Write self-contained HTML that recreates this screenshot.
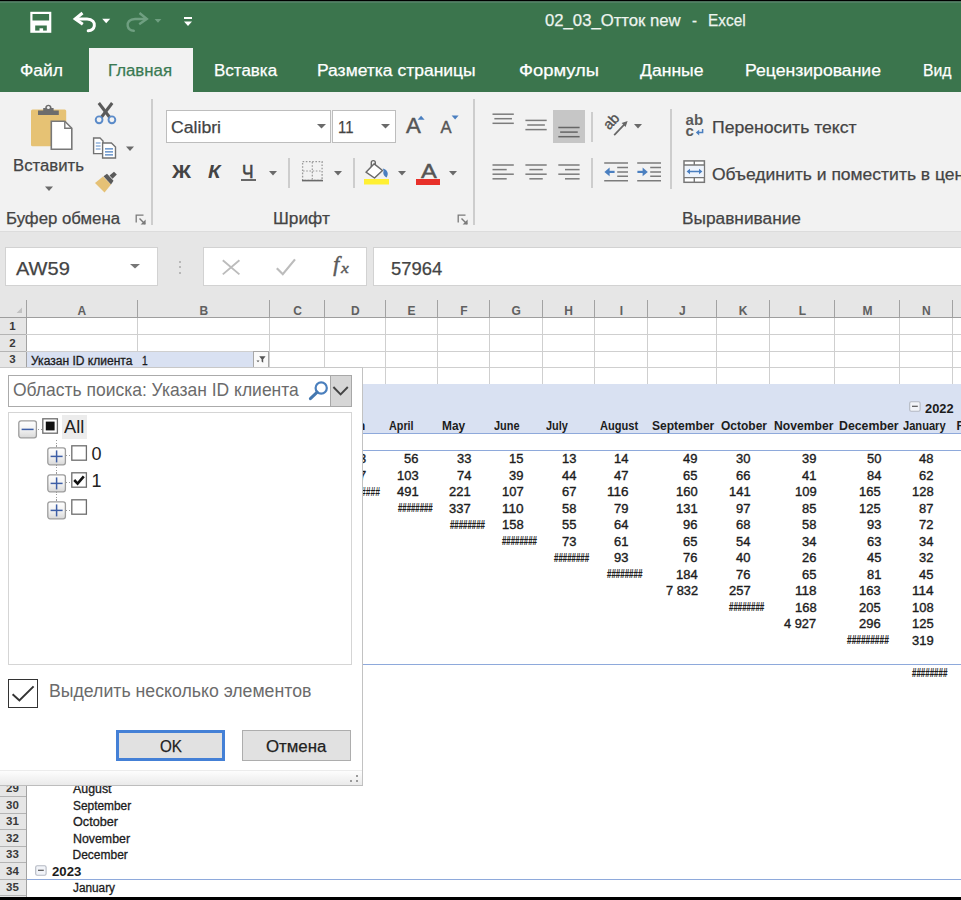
<!DOCTYPE html><html lang="ru"><head><meta charset="utf-8"><title>Excel</title><style>
html,body{margin:0;padding:0;}body{width:961px;height:900px;position:relative;overflow:hidden;background:#fff;font-family:"Liberation Sans", sans-serif;}
.a{position:absolute;display:block;}
.t{position:absolute;white-space:pre;line-height:1;transform-origin:0 0;}
</style></head><body>
<div class="a" style="left:0px;top:0px;width:961px;height:93px;background:#3b754d;"></div>
<div class="a" style="left:0px;top:0px;width:961px;height:1px;background:#000;"></div>
<div class="a" style="left:0px;top:1px;width:961px;height:1px;background:#4a705a;"></div>
<div class="a" style="left:0px;top:2px;width:961px;height:1px;background:#4f8062;"></div>
<div class="a" style="left:89px;top:47.5px;width:103.5px;height:46px;background:#f2f2f2;"></div>
<div class="a" style="left:0px;top:92px;width:961px;height:139px;background:#f2f2f2;"></div>
<div class="a" style="left:0px;top:230.5px;width:961px;height:1px;background:#dcdcdc;"></div>
<div class="a" style="left:0px;top:231.5px;width:961px;height:69px;background:#e6e6e6;"></div>
<svg class="a" style="left:28px;top:9px;" width="26" height="26" viewBox="0 0 26 26">
<rect x="3.4" y="3.9" width="18.8" height="18.8" fill="none" stroke="#fff" stroke-width="2.2"/>
<rect x="3.4" y="11.5" width="18.8" height="5" fill="#fff"/>
<rect x="3.4" y="16" width="3.8" height="6.5" fill="#fff"/>
<rect x="18.8" y="16" width="3.4" height="6.5" fill="#fff"/>
<rect x="11.5" y="19.3" width="3.6" height="3.4" fill="#fff"/>
</svg>
<svg class="a" style="left:70px;top:8px;" width="30" height="28" viewBox="0 0 30 28">
<path d="M12.5 5 L5.2 11 L12.8 16.2" fill="none" stroke="#fff" stroke-width="3" stroke-linejoin="miter"/>
<path d="M6 11 H17 C22.5 11 25 14.5 24.3 18 C23.8 20.6 21.6 22.5 18.2 22.8" fill="none" stroke="#fff" stroke-width="3" stroke-linecap="round"/>
</svg>
<svg class="a" style="left:101px;top:17px;" width="10" height="8" viewBox="0 0 10 8"><path d="M1.2 1.8 H9.2 L5.2 6.2 Z" fill="#fff"/></svg>
<svg class="a" style="left:122px;top:8px;" width="30" height="28" viewBox="0 0 30 28">
<path d="M17.5 5 L24.8 11 L17.2 16.2" fill="none" stroke="#6f9f81" stroke-width="2.4"/>
<path d="M24 11 H13 C7.5 11 5 14.5 5.7 18 C6.2 20.6 8.4 22.5 11.8 22.8" fill="none" stroke="#6f9f81" stroke-width="2.4" stroke-linecap="round"/>
</svg>
<svg class="a" style="left:153px;top:17px;" width="10" height="8" viewBox="0 0 10 8"><path d="M1.6 2 H8.4 L5 5.8 Z" fill="#6f9f81"/></svg>
<svg class="a" style="left:182.4px;top:14px;" width="12" height="16" viewBox="0 0 12 16"><rect x="2" y="3" width="8" height="2" fill="#fff"/><path d="M2 7.5 H10 L6 12 Z" fill="#fff"/></svg>
<svg class="a" style="left:28px;top:102px;" width="48" height="52" viewBox="0 0 48 52">
<rect x="3" y="7.4" width="35.2" height="36.8" rx="1.5" fill="#e6c274"/>
<path d="M10 8.6 H15.2 V6 H17.2 C17.2 1.6 23.6 1.6 23.6 6 H25.6 V8.6 H30.8 V13 H10 Z" fill="#6c6c6c"/>
<circle cx="20.4" cy="5.6" r="1.5" fill="#f1f1f1"/>
<path d="M23.3 19.3 H36.8 L43.8 26.3 V47.3 H23.3 Z" fill="#fff" stroke="#787878" stroke-width="1.6" stroke-linejoin="miter"/>
<path d="M36.8 19.3 V26.3 H43.8" fill="none" stroke="#787878" stroke-width="1.4"/>
</svg>
<svg class="a" style="left:44px;top:185px;" width="10" height="8" viewBox="0 0 10 8"><path d="M1 1.5 H9 L5 6 Z" fill="#6a6a6a"/></svg>
<svg class="a" style="left:93px;top:100px;" width="26" height="26" viewBox="0 0 26 26">
<path d="M5.8 3 L16.8 17.5" stroke="#5a5a5a" stroke-width="3" fill="none"/>
<path d="M19.2 3 L8.2 17.5" stroke="#5a5a5a" stroke-width="3" fill="none"/>
<circle cx="6.1" cy="19.8" r="3.4" fill="none" stroke="#5b8bc9" stroke-width="1.9"/>
<circle cx="18.9" cy="19.8" r="3.4" fill="none" stroke="#5b8bc9" stroke-width="1.9"/>
</svg>
<svg class="a" style="left:92px;top:135px;" width="28" height="28" viewBox="0 0 28 28">
<path d="M1.6 3 H8 L11 6 V18.6 H1.6 Z" fill="#fff" stroke="#727272" stroke-width="1.4"/>
<path d="M3.8 8 H8.6 M3.8 11 H8.6 M3.8 14 H8.6" stroke="#5b8bc9" stroke-width="1.2"/>
<path d="M10.6 8 H19.4 L23.5 12 V23 H10.6 Z" fill="#fff" stroke="#727272" stroke-width="1.4"/>
<path d="M13 13.8 H21 M13 16.8 H21 M13 19.8 H21" stroke="#4a7fc0" stroke-width="1.3"/>
</svg>
<svg class="a" style="left:125px;top:145px;" width="10" height="8" viewBox="0 0 10 8"><path d="M1 1.5 H9 L5 6 Z" fill="#6a6a6a"/></svg>
<svg class="a" style="left:92px;top:170px;" width="28" height="26" viewBox="0 0 28 26">
<path d="M3 13 L11 6.5 L19 14.5 L12.5 22.5 Z" fill="#e5c176"/>
<path d="M11.5 6.2 L15 3.8 L21.5 10.8 L19 14.4 Z" fill="#5a5a5a"/>
<path d="M17.5 5.5 L22 1.8 L24.8 4.6 L20.6 8.8 Z" fill="#5a5a5a"/>
</svg>
<svg class="a" style="left:134.5px;top:214px;" width="12" height="12" viewBox="0 0 12 12"><path d="M1.2 8.5 V1.2 H8.5" fill="none" stroke="#7a7a7a" stroke-width="1.3"/><path d="M4.5 4.5 L10 10" stroke="#7a7a7a" stroke-width="1.4"/><path d="M10.6 5.6 V10.6 H5.6 Z" fill="#7a7a7a"/></svg>
<div class="a" style="left:151.4px;top:99px;width:1.3px;height:126px;background:#cdcdcd;"></div>
<div class="a" style="left:165.5px;top:110px;width:165.5px;height:32.8px;background:#fff;border:1.3px solid #bdbdbd;box-sizing:border-box;"></div>
<div class="a" style="left:332.3px;top:110px;width:64px;height:32.8px;background:#fff;border:1.3px solid #bdbdbd;box-sizing:border-box;"></div>
<svg class="a" style="left:315.5px;top:122.8px;" width="11" height="7" viewBox="0 0 11 7"><path d="M1 1 H10 L5.5 5.4 Z" fill="#6a6a6a"/></svg>
<svg class="a" style="left:379.5px;top:122.8px;" width="11" height="7" viewBox="0 0 11 7"><path d="M1 1 H10 L5.5 5.4 Z" fill="#6a6a6a"/></svg>
<svg class="a" style="left:417px;top:114px;" width="10" height="7" viewBox="0 0 10 7"><path d="M0.6 5.8 H7.6 L4.1 1.7 Z" fill="#4a7fc0"/></svg>
<svg class="a" style="left:450.5px;top:114px;" width="10" height="7" viewBox="0 0 10 7"><path d="M0.6 1.5 H7.6 L4.1 5.6 Z" fill="#4a7fc0"/></svg>
<div class="a" style="left:240.6px;top:179px;width:15px;height:2px;background:#686868;"></div>
<svg class="a" style="left:267.5px;top:169.5px;" width="10" height="7" viewBox="0 0 10 7"><path d="M1 1 H9 L5.0 5.4 Z" fill="#6a6a6a"/></svg>
<div class="a" style="left:288.4px;top:157.5px;width:1.3px;height:30.5px;background:#cdcdcd;"></div>
<svg class="a" style="left:301px;top:160px;" width="24" height="23" viewBox="0 0 24 23">
<rect x="1.6" y="1.6" width="19.5" height="18.8" fill="none" stroke="#9a9a9a" stroke-width="1.3" stroke-dasharray="1.6 1.6"/>
<path d="M11.3 2 V20 M2 11 H21" stroke="#9a9a9a" stroke-width="1.2" stroke-dasharray="1.6 1.6"/>
<path d="M1 20.6 H22" stroke="#6a6a6a" stroke-width="1.6"/>
</svg>
<svg class="a" style="left:332.5px;top:169.5px;" width="10" height="7" viewBox="0 0 10 7"><path d="M1 1 H9 L5.0 5.4 Z" fill="#6a6a6a"/></svg>
<div class="a" style="left:353.4px;top:157.5px;width:1.3px;height:30.5px;background:#cdcdcd;"></div>
<svg class="a" style="left:362px;top:158px;" width="30" height="28" viewBox="0 0 30 28">
<path d="M9.5 8.5 L4 14.2 L12.5 20 L20.5 12.5 L12.2 5.8 Z" fill="#fff" stroke="#6a6a6a" stroke-width="1.5" stroke-linejoin="round"/>
<path d="M9.3 9 V4.6 C9.3 2 13.3 2 13.3 4.6 V7" fill="none" stroke="#6a6a6a" stroke-width="1.4"/>
<path d="M20.8 10.6 C25.4 11.6 27.2 15.8 24.6 19.4 C22 18.4 20.6 15.4 21.6 13 Z" fill="#4a7fc0"/>
<rect x="2" y="21" width="25" height="5.5" fill="#fff033"/>
</svg>
<svg class="a" style="left:397.0px;top:169.5px;" width="10" height="7" viewBox="0 0 10 7"><path d="M1 1 H9 L5.0 5.4 Z" fill="#6a6a6a"/></svg>
<div class="a" style="left:416px;top:179px;width:23.5px;height:5.5px;background:#e8302a;"></div>
<svg class="a" style="left:447.5px;top:169.5px;" width="10" height="7" viewBox="0 0 10 7"><path d="M1 1 H9 L5.0 5.4 Z" fill="#6a6a6a"/></svg>
<svg class="a" style="left:456.5px;top:214px;" width="12" height="12" viewBox="0 0 12 12"><path d="M1.2 8.5 V1.2 H8.5" fill="none" stroke="#7a7a7a" stroke-width="1.3"/><path d="M4.5 4.5 L10 10" stroke="#7a7a7a" stroke-width="1.4"/><path d="M10.6 5.6 V10.6 H5.6 Z" fill="#7a7a7a"/></svg>
<div class="a" style="left:473.4px;top:99px;width:1.3px;height:126px;background:#cdcdcd;"></div>
<div class="a" style="left:552.5px;top:109.7px;width:32.8px;height:33.6px;background:#c6c6c6;"></div>
<svg class="a" style="left:0px;top:0px;" width="961" height="240" viewBox="0 0 961 240"><rect x="492.50" y="113.45" width="21.30" height="1.5" fill="#7c7c7c"/><rect x="494.35" y="117.95" width="17.60" height="1.5" fill="#7c7c7c"/><rect x="492.50" y="122.55" width="21.30" height="1.5" fill="#7c7c7c"/><rect x="525.40" y="119.65" width="21.30" height="1.5" fill="#7c7c7c"/><rect x="527.25" y="124.25" width="17.60" height="1.5" fill="#7c7c7c"/><rect x="525.40" y="128.85" width="21.30" height="1.5" fill="#7c7c7c"/><rect x="558.30" y="126.75" width="21.30" height="1.5" fill="#666"/><rect x="560.15" y="131.35" width="17.60" height="1.5" fill="#666"/><rect x="558.30" y="135.95" width="21.30" height="1.5" fill="#666"/><rect x="492.50" y="164.25" width="21.30" height="1.5" fill="#7c7c7c"/><rect x="492.50" y="168.85" width="14.20" height="1.5" fill="#7c7c7c"/><rect x="492.50" y="173.45" width="21.30" height="1.5" fill="#7c7c7c"/><rect x="492.50" y="178.05" width="14.20" height="1.5" fill="#7c7c7c"/><rect x="525.40" y="164.25" width="21.30" height="1.5" fill="#7c7c7c"/><rect x="529.35" y="168.85" width="13.40" height="1.5" fill="#7c7c7c"/><rect x="525.40" y="173.45" width="21.30" height="1.5" fill="#7c7c7c"/><rect x="529.35" y="178.05" width="13.40" height="1.5" fill="#7c7c7c"/><rect x="558.30" y="164.25" width="21.30" height="1.5" fill="#7c7c7c"/><rect x="565.00" y="168.85" width="14.60" height="1.5" fill="#7c7c7c"/><rect x="558.30" y="173.45" width="21.30" height="1.5" fill="#7c7c7c"/><rect x="565.00" y="178.05" width="14.60" height="1.5" fill="#7c7c7c"/></svg>
<div class="a" style="left:591.4px;top:111.5px;width:1.3px;height:30.0px;background:#cdcdcd;"></div>
<div class="a" style="left:591.4px;top:157.5px;width:1.3px;height:30.5px;background:#cdcdcd;"></div>
<svg class="a" style="left:601px;top:108px;" width="32" height="32" viewBox="0 0 32 32">
<path d="M13.2 27.2 L24.6 15.2" stroke="#666" stroke-width="1.7"/>
<path d="M26.6 13 L20.6 15.1 L24.6 19 Z" fill="#666"/>
<text x="0" y="0" transform="translate(8.2 22.6) rotate(-47)" font-family="Liberation Sans, sans-serif" font-size="14.5" fill="#505050" stroke="#505050" stroke-width="0.35">ab</text>
</svg>
<svg class="a" style="left:632.5px;top:123.4px;" width="10" height="7" viewBox="0 0 10 7"><path d="M1 1 H9 L5.0 5.4 Z" fill="#6a6a6a"/></svg>
<svg class="a" style="left:603.5px;top:161.5px;" width="24" height="20" viewBox="0 0 24 20"><path d="M0.2 1 H24 M0.2 18.8 H24" stroke="#7c7c7c" stroke-width="1.5"/><path d="M13.2 5.5 H24 M13.2 9.9 H24 M13.2 14.3 H24" stroke="#7c7c7c" stroke-width="1.5"/><path d="M4 9.9 H10.6" stroke="#4a7fc0" stroke-width="2.2"/><path d="M5.6 5.6 L0.4 9.9 L5.6 14.2 Z" fill="#4a7fc0"/></svg>
<svg class="a" style="left:636.5px;top:161.5px;" width="24" height="20" viewBox="0 0 24 20"><path d="M0.2 1 H24 M0.2 18.8 H24" stroke="#7c7c7c" stroke-width="1.5"/><path d="M13.2 5.5 H24 M13.2 9.9 H24 M13.2 14.3 H24" stroke="#7c7c7c" stroke-width="1.5"/><path d="M0.4 9.9 H7" stroke="#4a7fc0" stroke-width="2.2"/><path d="M5.6 5.6 L10.8 9.9 L5.6 14.2 Z" fill="#4a7fc0"/></svg>
<div class="a" style="left:670.4px;top:109px;width:1.3px;height:80px;background:#cdcdcd;"></div>
<svg class="a" style="left:683px;top:110px;" width="26" height="30" viewBox="0 0 26 30">
<text x="2.6" y="14.8" font-family="Liberation Sans, sans-serif" font-size="14.6" font-weight="700" fill="#5a5a5a" textLength="17.6" lengthAdjust="spacingAndGlyphs">ab</text>
<text x="2.6" y="26.2" font-family="Liberation Sans, sans-serif" font-size="15" font-weight="700" fill="#5a5a5a">c</text>
<path d="M19.6 19 V22.6 H14.6" fill="none" stroke="#4a7fc0" stroke-width="1.5"/>
<path d="M16.2 19.8 L12.8 22.6 L16.2 25.4 Z" fill="#4a7fc0"/>
</svg>
<svg class="a" style="left:682px;top:159px;" width="26" height="26" viewBox="0 0 26 26">
<rect x="2" y="1.9" width="20.4" height="21.4" fill="#fff" stroke="#777" stroke-width="1.5"/>
<rect x="2.8" y="6.4" width="18.8" height="11.8" fill="#eef4fc"/>
<path d="M2 6 H22.4 M2 18.6 H22.4 M12.3 1.9 V6 M12.3 18.6 V23.3" stroke="#777" stroke-width="1.4"/>
<path d="M6.5 12.5 H18.5" stroke="#4a7fc0" stroke-width="1.5"/>
<path d="M8 9.7 L4.6 12.5 L8 15.3 Z M17 9.7 L20.4 12.5 L17 15.3 Z" fill="#4a7fc0"/>
</svg>
<div class="a" style="left:5px;top:247px;width:153px;height:39px;background:#fff;border:1px solid #d2d2d2;box-sizing:border-box;"></div>
<svg class="a" style="left:128.5px;top:262.5px;" width="12" height="7" viewBox="0 0 12 7"><path d="M1 1 H11 L6.0 5.4 Z" fill="#777"/></svg>
<div class="a" style="left:179px;top:260.5px;width:2px;height:2px;background:#b8b8b8;"></div>
<div class="a" style="left:179px;top:266px;width:2px;height:2px;background:#b8b8b8;"></div>
<div class="a" style="left:179px;top:271.5px;width:2px;height:2px;background:#b8b8b8;"></div>
<div class="a" style="left:203px;top:247px;width:164px;height:39px;background:#fff;border:1px solid #d2d2d2;box-sizing:border-box;"></div>
<svg class="a" style="left:221px;top:258px;" width="20" height="19" viewBox="0 0 20 19"><path d="M1.8 2.2 L18.4 16.4 M18.4 2.2 L1.8 16.4" stroke="#bcbcbc" stroke-width="1.9" fill="none"/></svg>
<svg class="a" style="left:274px;top:257px;" width="24" height="20" viewBox="0 0 24 20"><path d="M2.8 11.2 L8.8 17.2 L21 2.4" stroke="#bcbcbc" stroke-width="2.2" fill="none"/></svg>
<div class="a" style="left:373px;top:247px;width:600px;height:39px;background:#fff;border:1px solid #d2d2d2;box-sizing:border-box;"></div>
<div class="a" style="left:0px;top:300px;width:961px;height:18px;background:#e6e6e6;"></div>
<div class="a" style="left:0px;top:317px;width:961px;height:1px;background:#9e9e9e;"></div>
<div class="a" style="left:137px;top:300px;width:1px;height:17px;background:#a2a2a2;"></div>
<div class="a" style="left:269px;top:300px;width:1px;height:17px;background:#a2a2a2;"></div>
<div class="a" style="left:324px;top:300px;width:1px;height:17px;background:#a2a2a2;"></div>
<div class="a" style="left:385px;top:300px;width:1px;height:17px;background:#a2a2a2;"></div>
<div class="a" style="left:437px;top:300px;width:1px;height:17px;background:#a2a2a2;"></div>
<div class="a" style="left:489px;top:300px;width:1px;height:17px;background:#a2a2a2;"></div>
<div class="a" style="left:542px;top:300px;width:1px;height:17px;background:#a2a2a2;"></div>
<div class="a" style="left:594px;top:300px;width:1px;height:17px;background:#a2a2a2;"></div>
<div class="a" style="left:647px;top:300px;width:1px;height:17px;background:#a2a2a2;"></div>
<div class="a" style="left:716px;top:300px;width:1px;height:17px;background:#a2a2a2;"></div>
<div class="a" style="left:769px;top:300px;width:1px;height:17px;background:#a2a2a2;"></div>
<div class="a" style="left:834px;top:300px;width:1px;height:17px;background:#a2a2a2;"></div>
<div class="a" style="left:899px;top:300px;width:1px;height:17px;background:#a2a2a2;"></div>
<div class="a" style="left:952px;top:300px;width:1px;height:17px;background:#a2a2a2;"></div>
<div class="a" style="left:1009px;top:300px;width:1px;height:17px;background:#a2a2a2;"></div>
<div class="a" style="left:26px;top:300px;width:1px;height:17px;background:#a2a2a2;"></div>
<svg class="a" style="left:15px;top:306px;" width="8" height="8" viewBox="0 0 8 8"><path d="M7 1.6 V7 H1.6 Z" fill="#c2c2c2"/></svg>
<div class="a" style="left:0px;top:318px;width:26px;height:580px;background:#e6e6e6;"></div>
<div class="a" style="left:26px;top:318px;width:1px;height:580px;background:#a2a2a2;"></div>
<div class="a" style="left:0px;top:334px;width:26px;height:1px;background:#b4b4b4;"></div>
<div class="a" style="left:0px;top:351px;width:26px;height:1px;background:#b4b4b4;"></div>
<div class="a" style="left:0px;top:367px;width:26px;height:1px;background:#b4b4b4;"></div>
<div class="a" style="left:0px;top:384px;width:26px;height:1px;background:#b4b4b4;"></div>
<div class="a" style="left:0px;top:400px;width:26px;height:1px;background:#b4b4b4;"></div>
<div class="a" style="left:0px;top:417px;width:26px;height:1px;background:#b4b4b4;"></div>
<div class="a" style="left:0px;top:433px;width:26px;height:1px;background:#b4b4b4;"></div>
<div class="a" style="left:0px;top:450px;width:26px;height:1px;background:#b4b4b4;"></div>
<div class="a" style="left:0px;top:466px;width:26px;height:1px;background:#b4b4b4;"></div>
<div class="a" style="left:0px;top:483px;width:26px;height:1px;background:#b4b4b4;"></div>
<div class="a" style="left:0px;top:499px;width:26px;height:1px;background:#b4b4b4;"></div>
<div class="a" style="left:0px;top:516px;width:26px;height:1px;background:#b4b4b4;"></div>
<div class="a" style="left:0px;top:532px;width:26px;height:1px;background:#b4b4b4;"></div>
<div class="a" style="left:0px;top:549px;width:26px;height:1px;background:#b4b4b4;"></div>
<div class="a" style="left:0px;top:565px;width:26px;height:1px;background:#b4b4b4;"></div>
<div class="a" style="left:0px;top:582px;width:26px;height:1px;background:#b4b4b4;"></div>
<div class="a" style="left:0px;top:598px;width:26px;height:1px;background:#b4b4b4;"></div>
<div class="a" style="left:0px;top:615px;width:26px;height:1px;background:#b4b4b4;"></div>
<div class="a" style="left:0px;top:631px;width:26px;height:1px;background:#b4b4b4;"></div>
<div class="a" style="left:0px;top:648px;width:26px;height:1px;background:#b4b4b4;"></div>
<div class="a" style="left:0px;top:664px;width:26px;height:1px;background:#b4b4b4;"></div>
<div class="a" style="left:0px;top:681px;width:26px;height:1px;background:#b4b4b4;"></div>
<div class="a" style="left:0px;top:697px;width:26px;height:1px;background:#b4b4b4;"></div>
<div class="a" style="left:0px;top:714px;width:26px;height:1px;background:#b4b4b4;"></div>
<div class="a" style="left:0px;top:730px;width:26px;height:1px;background:#b4b4b4;"></div>
<div class="a" style="left:0px;top:747px;width:26px;height:1px;background:#b4b4b4;"></div>
<div class="a" style="left:0px;top:763px;width:26px;height:1px;background:#b4b4b4;"></div>
<div class="a" style="left:0px;top:780px;width:26px;height:1px;background:#b4b4b4;"></div>
<div class="a" style="left:0px;top:796px;width:26px;height:1px;background:#b4b4b4;"></div>
<div class="a" style="left:0px;top:813px;width:26px;height:1px;background:#b4b4b4;"></div>
<div class="a" style="left:0px;top:829px;width:26px;height:1px;background:#b4b4b4;"></div>
<div class="a" style="left:0px;top:846px;width:26px;height:1px;background:#b4b4b4;"></div>
<div class="a" style="left:0px;top:862px;width:26px;height:1px;background:#b4b4b4;"></div>
<div class="a" style="left:0px;top:879px;width:26px;height:1px;background:#b4b4b4;"></div>
<div class="a" style="left:0px;top:895px;width:26px;height:1px;background:#b4b4b4;"></div>
<div class="a" style="left:26px;top:334px;width:961px;height:1px;background:#cfcfcf;"></div>
<div class="a" style="left:26px;top:351px;width:961px;height:1px;background:#cfcfcf;"></div>
<div class="a" style="left:26px;top:367px;width:961px;height:1px;background:#cfcfcf;"></div>
<div class="a" style="left:26px;top:384px;width:961px;height:1px;background:#cfcfcf;"></div>
<div class="a" style="left:137px;top:318px;width:1px;height:66px;background:#cfcfcf;"></div>
<div class="a" style="left:269px;top:318px;width:1px;height:66px;background:#cfcfcf;"></div>
<div class="a" style="left:324px;top:318px;width:1px;height:66px;background:#cfcfcf;"></div>
<div class="a" style="left:385px;top:318px;width:1px;height:66px;background:#cfcfcf;"></div>
<div class="a" style="left:437px;top:318px;width:1px;height:66px;background:#cfcfcf;"></div>
<div class="a" style="left:489px;top:318px;width:1px;height:66px;background:#cfcfcf;"></div>
<div class="a" style="left:542px;top:318px;width:1px;height:66px;background:#cfcfcf;"></div>
<div class="a" style="left:594px;top:318px;width:1px;height:66px;background:#cfcfcf;"></div>
<div class="a" style="left:647px;top:318px;width:1px;height:66px;background:#cfcfcf;"></div>
<div class="a" style="left:716px;top:318px;width:1px;height:66px;background:#cfcfcf;"></div>
<div class="a" style="left:769px;top:318px;width:1px;height:66px;background:#cfcfcf;"></div>
<div class="a" style="left:834px;top:318px;width:1px;height:66px;background:#cfcfcf;"></div>
<div class="a" style="left:899px;top:318px;width:1px;height:66px;background:#cfcfcf;"></div>
<div class="a" style="left:952px;top:318px;width:1px;height:66px;background:#cfcfcf;"></div>
<div class="a" style="left:1009px;top:318px;width:1px;height:66px;background:#cfcfcf;"></div>
<div class="a" style="left:27px;top:352px;width:242px;height:15px;background:#d9e1f2;"></div>
<div class="a" style="left:253px;top:351px;width:16px;height:17px;background:#fafafa;border:1px solid #a8a8a8;box-sizing:border-box;"></div>
<svg class="a" style="left:254.5px;top:354.2px;" width="12" height="11" viewBox="0 0 12 11"><path d="M4.2 2.2 H10.6 L8.2 5.2 V8.8 L6.6 7.6 V5.2 Z" fill="#555"/><path d="M1.5 6.5 H4.5 L3 8.3 Z" fill="#555"/></svg>
<div class="a" style="left:27px;top:384px;width:961px;height:49px;background:#d9e1f2;"></div>
<div class="a" style="left:27px;top:433px;width:961px;height:1px;background:#8ea9db;"></div>
<div class="a" style="left:27px;top:450px;width:961px;height:1px;background:#8ea9db;"></div>
<div class="a" style="left:27px;top:664px;width:961px;height:1px;background:#8ea9db;"></div>
<div class="a" style="left:27px;top:879px;width:961px;height:1px;background:#8ea9db;"></div>
<svg class="a" style="left:908.8px;top:401.4px;" width="12" height="11" viewBox="0 0 12 11"><rect x="0.7" y="0.7" width="10.4" height="9.6" rx="1.5" fill="#f2f4f9" stroke="#b4b8c2" stroke-width="1.1"/><path d="M3 5.3 H8.8" stroke="#555" stroke-width="1.2"/></svg>
<svg class="a" style="left:35px;top:864.5px;" width="12" height="11" viewBox="0 0 12 11"><rect x="0.7" y="0.7" width="10.4" height="9.6" rx="1.5" fill="#f2f4f9" stroke="#b4b8c2" stroke-width="1.1"/><path d="M3 5.3 H8.8" stroke="#555" stroke-width="1.2"/></svg>
<div class="a" style="left:0px;top:897px;width:961px;height:3px;background:#000;z-index:50;"></div>
<div class="a" style="left:0px;top:367.3px;width:363.4px;height:418.6px;background:#fff;z-index:10;"></div>
<div class="a" style="left:362.2px;top:367.3px;width:1.3px;height:418.6px;background:#c2c2c2;z-index:10;"></div>
<div class="a" style="left:0px;top:367.3px;width:363.4px;height:1px;background:#c8c8c8;z-index:10;"></div>
<div class="a" style="left:0px;top:770px;width:362.2px;height:15.8px;z-index:10;background:linear-gradient(#fdfdfd,#e9e9e9);border-top:1px solid #ececec;box-sizing:border-box;"></div>
<div class="a" style="left:0px;top:785.2px;width:363.4px;height:1px;background:#bdbdbd;z-index:10;"></div>
<div class="a" style="left:355.5px;top:774.5px;width:2px;height:2px;background:#9a9a9a;z-index:10;"></div>
<div class="a" style="left:355.5px;top:779.8px;width:2px;height:2px;background:#9a9a9a;z-index:10;"></div>
<div class="a" style="left:350.2px;top:779.8px;width:2px;height:2px;background:#9a9a9a;z-index:10;"></div>
<div class="a" style="left:8.3px;top:375px;width:344px;height:32px;background:#fff;border:1.4px solid #ababab;box-sizing:border-box;z-index:10;"></div>
<div class="a" style="left:330.4px;top:375px;width:22px;height:32px;background:#d6d6d6;border:1.4px solid #a8a8a8;box-sizing:border-box;z-index:10;"></div>
<svg class="a" style="left:330.5px;top:381.5px;z-index:10;" width="20" height="18" viewBox="0 0 20 18"><path d="M2.4 5 L9.6 12.4 L16.8 5" fill="none" stroke="#444" stroke-width="1.9"/></svg>
<svg class="a" style="left:307.2px;top:379.2px;z-index:10;" width="24" height="22" viewBox="0 0 24 22"><circle cx="14.2" cy="9" r="5.6" fill="none" stroke="#4a7fbd" stroke-width="2.2"/><path d="M10.2 13.2 L3.4 19.6" stroke="#4478b0" stroke-width="3" stroke-linecap="round"/></svg>
<div class="a" style="left:8.3px;top:412px;width:344px;height:253px;background:#fff;border:1.2px solid #d5d5d5;box-sizing:border-box;z-index:10;"></div>
<div class="a" style="left:56px;top:440px;width:1px;height:61px;z-index:10;background:repeating-linear-gradient(#9a9a9a 0 1.3px,transparent 1.3px 2.7px);"></div>
<div class="a" style="left:37.5px;top:428.6px;width:5px;height:1px;z-index:10;background:repeating-linear-gradient(90deg,#9a9a9a 0 1.3px,transparent 1.3px 2.7px);"></div>
<div class="a" style="left:65.6px;top:455.4px;width:5.5px;height:1px;z-index:10;background:repeating-linear-gradient(90deg,#9a9a9a 0 1.3px,transparent 1.3px 2.7px);"></div>
<div class="a" style="left:65.6px;top:482.4px;width:5.5px;height:1px;z-index:10;background:repeating-linear-gradient(90deg,#9a9a9a 0 1.3px,transparent 1.3px 2.7px);"></div>
<div class="a" style="left:65.6px;top:509.6px;width:5.5px;height:1px;z-index:10;background:repeating-linear-gradient(90deg,#9a9a9a 0 1.3px,transparent 1.3px 2.7px);"></div>
<div class="a" style="left:62.3px;top:415px;width:24.5px;height:23.8px;background:#ececec;z-index:10;"></div>
<svg class="a" style="left:18px;top:419.6px;z-index:10;" width="20" height="19" viewBox="0 0 20 19"><defs><linearGradient id="g419" x1="0" y1="0" x2="0" y2="1"><stop offset="0" stop-color="#fff"/><stop offset="0.5" stop-color="#f3f3f3"/><stop offset="1" stop-color="#d8d8d8"/></linearGradient></defs><rect x="0.8" y="0.8" width="17.6" height="17" rx="2.2" fill="url(#g419)" stroke="#9c9c9c" stroke-width="1.3"/><path d="M3.6 9.4 H15.6" stroke="#3d5ea6" stroke-width="1.5"/></svg>
<svg class="a" style="left:42.2px;top:418.2px;z-index:10;" width="17" height="17" viewBox="0 0 17 17"><rect x="0.8" y="0.8" width="14.6" height="14.4" fill="#fff" stroke="#6e6e6e" stroke-width="1.3"/><rect x="3.8" y="3.6" width="8.8" height="8.8" fill="#111"/></svg>
<svg class="a" style="left:46.6px;top:446.6px;z-index:10;" width="20" height="19" viewBox="0 0 20 19"><defs><linearGradient id="g446" x1="0" y1="0" x2="0" y2="1"><stop offset="0" stop-color="#fff"/><stop offset="0.5" stop-color="#f3f3f3"/><stop offset="1" stop-color="#d8d8d8"/></linearGradient></defs><rect x="0.8" y="0.8" width="17.6" height="17" rx="2.2" fill="url(#g446)" stroke="#9c9c9c" stroke-width="1.3"/><path d="M3.6 9.4 H15.6" stroke="#3d5ea6" stroke-width="1.5"/><path d="M9.6 3.4 V15.4" stroke="#3d5ea6" stroke-width="1.5"/></svg>
<svg class="a" style="left:70.6px;top:445.20000000000005px;z-index:10;" width="17" height="17" viewBox="0 0 17 17"><rect x="0.8" y="0.8" width="14.6" height="14.4" fill="#fff" stroke="#6e6e6e" stroke-width="1.3"/></svg>
<svg class="a" style="left:46.6px;top:473.6px;z-index:10;" width="20" height="19" viewBox="0 0 20 19"><defs><linearGradient id="g473" x1="0" y1="0" x2="0" y2="1"><stop offset="0" stop-color="#fff"/><stop offset="0.5" stop-color="#f3f3f3"/><stop offset="1" stop-color="#d8d8d8"/></linearGradient></defs><rect x="0.8" y="0.8" width="17.6" height="17" rx="2.2" fill="url(#g473)" stroke="#9c9c9c" stroke-width="1.3"/><path d="M3.6 9.4 H15.6" stroke="#3d5ea6" stroke-width="1.5"/><path d="M9.6 3.4 V15.4" stroke="#3d5ea6" stroke-width="1.5"/></svg>
<svg class="a" style="left:70.6px;top:472.20000000000005px;z-index:10;" width="17" height="17" viewBox="0 0 17 17"><rect x="0.8" y="0.8" width="14.6" height="14.4" fill="#fff" stroke="#6e6e6e" stroke-width="1.3"/><path d="M3.2 8 L6.6 11.6 L12.8 4.4" fill="none" stroke="#111" stroke-width="2.6"/></svg>
<svg class="a" style="left:46.6px;top:500.6px;z-index:10;" width="20" height="19" viewBox="0 0 20 19"><defs><linearGradient id="g500" x1="0" y1="0" x2="0" y2="1"><stop offset="0" stop-color="#fff"/><stop offset="0.5" stop-color="#f3f3f3"/><stop offset="1" stop-color="#d8d8d8"/></linearGradient></defs><rect x="0.8" y="0.8" width="17.6" height="17" rx="2.2" fill="url(#g500)" stroke="#9c9c9c" stroke-width="1.3"/><path d="M3.6 9.4 H15.6" stroke="#3d5ea6" stroke-width="1.5"/><path d="M9.6 3.4 V15.4" stroke="#3d5ea6" stroke-width="1.5"/></svg>
<svg class="a" style="left:70.6px;top:499.20000000000005px;z-index:10;" width="17" height="17" viewBox="0 0 17 17"><rect x="0.8" y="0.8" width="14.6" height="14.4" fill="#fff" stroke="#6e6e6e" stroke-width="1.3"/></svg>
<div class="a" style="left:8px;top:679px;width:29.6px;height:29.2px;background:#fff;border:1.7px solid #333;box-sizing:border-box;z-index:10;"></div>
<svg class="a" style="left:9px;top:680px;z-index:10;" width="28" height="28" viewBox="0 0 28 28"><path d="M3.6 14.2 L10.4 20.4 L24.6 6.4" fill="none" stroke="#333" stroke-width="2"/></svg>
<div class="a" style="left:116px;top:730px;width:109px;height:31px;background:#e1e1e1;border:3px solid #4480d6;box-sizing:border-box;z-index:10;"></div>
<div class="a" style="left:242px;top:730px;width:109.4px;height:30.8px;background:#e1e1e1;border:1.3px solid #adadad;box-sizing:border-box;z-index:10;"></div>
<span class="t" id="t0" style="top:12.16px;font-size:17.3px;color:#eef4ef;-webkit-text-stroke:0.25px #eef4ef;left:545.00px;transform:scaleX(0.9657);">02_03_Отток new</span>
<span class="t" id="t1" style="top:12.16px;font-size:17.3px;color:#eef4ef;-webkit-text-stroke:0.25px #eef4ef;left:691.90px;transform:scaleX(0.8672);">-</span>
<span class="t" id="t2" style="top:12.16px;font-size:17.3px;color:#eef4ef;-webkit-text-stroke:0.25px #eef4ef;left:708.00px;transform:scaleX(0.8896);">Excel</span>
<span class="t" id="t3" style="top:62.06px;font-size:17.3px;color:#fff;-webkit-text-stroke:0.25px #fff;left:20.00px;transform:scaleX(1.0118);">Файл</span>
<span class="t" id="t4" style="top:62.06px;font-size:17.3px;color:#3a7a52;-webkit-text-stroke:0.25px #3a7a52;left:108.00px;transform:scaleX(0.9729);">Главная</span>
<span class="t" id="t5" style="top:62.06px;font-size:17.3px;color:#fff;-webkit-text-stroke:0.25px #fff;left:213.50px;transform:scaleX(0.9823);">Вставка</span>
<span class="t" id="t6" style="top:62.06px;font-size:17.3px;color:#fff;-webkit-text-stroke:0.25px #fff;left:317.30px;transform:scaleX(1.0122);">Разметка страницы</span>
<span class="t" id="t7" style="top:62.06px;font-size:17.3px;color:#fff;-webkit-text-stroke:0.25px #fff;left:519.00px;transform:scaleX(1.0638);">Формулы</span>
<span class="t" id="t8" style="top:62.06px;font-size:17.3px;color:#fff;-webkit-text-stroke:0.25px #fff;left:640.00px;transform:scaleX(1.0170);">Данные</span>
<span class="t" id="t9" style="top:62.06px;font-size:17.3px;color:#fff;-webkit-text-stroke:0.25px #fff;left:745.00px;transform:scaleX(1.0191);">Рецензирование</span>
<span class="t" id="t10" style="top:62.06px;font-size:17.3px;color:#fff;-webkit-text-stroke:0.25px #fff;left:922.50px;transform:scaleX(0.9115);">Вид</span>
<span class="t" id="t11" style="top:157.06px;font-size:17.3px;color:#444444;-webkit-text-stroke:0.25px #444444;left:13.00px;transform:scaleX(0.9691);">Вставить</span>
<span class="t" id="t12" style="top:210.06px;font-size:17.3px;color:#444444;-webkit-text-stroke:0.25px #444444;left:5.50px;transform:scaleX(0.9707);">Буфер обмена</span>
<span class="t" id="t13" style="top:118.56px;font-size:17.3px;color:#444444;-webkit-text-stroke:0.25px #444444;left:171.00px;transform:scaleX(1.0207);">Calibri</span>
<span class="t" id="t14" style="top:118.56px;font-size:17.3px;color:#444444;-webkit-text-stroke:0.25px #444444;left:337.50px;transform:scaleX(0.8634);">11</span>
<span class="t" id="t15" style="top:116.20px;font-size:21.5px;color:#555;-webkit-text-stroke:0.45px #555;left:405.60px;transform:scaleX(1.0318);">A</span>
<span class="t" id="t16" style="top:120.35px;font-size:16.6px;color:#555;-webkit-text-stroke:0.4px #555;left:440.60px;">A</span>
<span class="t" id="t17" style="top:163.04px;font-size:18.5px;color:#444;font-weight:700;left:172.00px;transform:scaleX(1.1354);">Ж</span>
<span class="t" id="t18" style="top:163.04px;font-size:18.5px;color:#444;font-weight:700;font-style:italic;left:207.50px;transform:scaleX(1.0989);">К</span>
<span class="t" id="t19" style="top:162.64px;font-size:18.5px;color:#444;-webkit-text-stroke:0.55px #444;left:241.50px;transform:scaleX(0.9316);">Ч</span>
<span class="t" id="t20" style="top:161.37px;font-size:20px;color:#555;-webkit-text-stroke:0.45px #555;left:421.40px;transform:scaleX(1.1841);">A</span>
<span class="t" id="t21" style="top:210.06px;font-size:17.3px;color:#444444;-webkit-text-stroke:0.25px #444444;left:273.00px;">Шрифт</span>
<span class="t" id="t22" style="top:119.06px;font-size:17.3px;color:#444444;-webkit-text-stroke:0.25px #444444;left:712.40px;transform:scaleX(1.0177);">Переносить текст</span>
<span class="t" id="t23" style="top:165.56px;font-size:17.3px;color:#444444;-webkit-text-stroke:0.25px #444444;left:712.40px;transform:scaleX(1.0125);">Объединить и поместить в центре</span>
<span class="t" id="t24" style="top:210.06px;font-size:17.3px;color:#444444;-webkit-text-stroke:0.25px #444444;left:682.00px;">Выравнивание</span>
<span class="t" id="t25" style="top:258.62px;font-size:19px;color:#444;-webkit-text-stroke:0.25px #444;left:15.60px;transform:scaleX(1.0539);">AW59</span>
<span class="t" id="t26" style="top:253.80px;font-size:21.5px;color:#5a5a5a;font-style:italic;font-family:'Liberation Serif', serif;-webkit-text-stroke:0.5px #5a5a5a;left:333.20px;">f</span>
<span class="t" id="t27" style="top:260.73px;font-size:14.5px;color:#5a5a5a;font-style:italic;font-family:'Liberation Serif', serif;-webkit-text-stroke:0.4px #5a5a5a;left:340.60px;transform:scaleX(1.2117);">x</span>
<span class="t" id="t28" style="top:258.62px;font-size:19px;color:#444;-webkit-text-stroke:0.25px #444;left:390.70px;transform:scaleX(0.9708);">57964</span>
<span class="t" id="t29" style="top:305.24px;font-size:12px;color:#606060;font-weight:700;left:77.46px;">A</span>
<span class="t" id="t30" style="top:305.24px;font-size:12px;color:#606060;font-weight:700;left:199.46px;">B</span>
<span class="t" id="t31" style="top:305.24px;font-size:12px;color:#606060;font-weight:700;left:293.16px;">C</span>
<span class="t" id="t32" style="top:305.24px;font-size:12px;color:#606060;font-weight:700;left:350.91px;">D</span>
<span class="t" id="t33" style="top:305.24px;font-size:12px;color:#606060;font-weight:700;left:407.54px;">E</span>
<span class="t" id="t34" style="top:305.24px;font-size:12px;color:#606060;font-weight:700;left:460.13px;">F</span>
<span class="t" id="t35" style="top:305.24px;font-size:12px;color:#606060;font-weight:700;left:511.53px;">G</span>
<span class="t" id="t36" style="top:305.24px;font-size:12px;color:#606060;font-weight:700;left:564.36px;">H</span>
<span class="t" id="t37" style="top:305.24px;font-size:12px;color:#606060;font-weight:700;left:619.73px;">I</span>
<span class="t" id="t38" style="top:305.24px;font-size:12px;color:#606060;font-weight:700;left:678.96px;">J</span>
<span class="t" id="t39" style="top:305.24px;font-size:12px;color:#606060;font-weight:700;left:738.81px;">K</span>
<span class="t" id="t40" style="top:305.24px;font-size:12px;color:#606060;font-weight:700;left:798.68px;">L</span>
<span class="t" id="t41" style="top:305.24px;font-size:12px;color:#606060;font-weight:700;left:862.60px;">M</span>
<span class="t" id="t42" style="top:305.24px;font-size:12px;color:#606060;font-weight:700;left:922.06px;">N</span>
<span class="t" id="t43" style="top:321.37px;font-size:11.5px;color:#3a3a3a;font-weight:700;left:9.30px;">1</span>
<span class="t" id="t44" style="top:337.87px;font-size:11.5px;color:#3a3a3a;font-weight:700;left:9.30px;">2</span>
<span class="t" id="t45" style="top:354.37px;font-size:11.5px;color:#3a3a3a;font-weight:700;left:9.30px;">3</span>
<span class="t" id="t46" style="top:783.37px;font-size:11.5px;color:#3a3a3a;font-weight:700;left:6.10px;">29</span>
<span class="t" id="t47" style="top:799.87px;font-size:11.5px;color:#3a3a3a;font-weight:700;left:6.10px;">30</span>
<span class="t" id="t48" style="top:816.37px;font-size:11.5px;color:#3a3a3a;font-weight:700;left:6.10px;">31</span>
<span class="t" id="t49" style="top:832.87px;font-size:11.5px;color:#3a3a3a;font-weight:700;left:6.10px;">32</span>
<span class="t" id="t50" style="top:849.37px;font-size:11.5px;color:#3a3a3a;font-weight:700;left:6.10px;">33</span>
<span class="t" id="t51" style="top:865.87px;font-size:11.5px;color:#3a3a3a;font-weight:700;left:6.10px;">34</span>
<span class="t" id="t52" style="top:882.37px;font-size:11.5px;color:#3a3a3a;font-weight:700;left:6.10px;">35</span>
<span class="t" id="t53" style="top:354.54px;font-size:12px;color:#1c1c1c;-webkit-text-stroke:0.3px #1c1c1c;left:30.60px;transform:scaleX(1.0035);">Указан ID клиента</span>
<span class="t" id="t54" style="top:354.54px;font-size:12px;color:#1c1c1c;-webkit-text-stroke:0.3px #1c1c1c;left:142.30px;transform:scaleX(0.8523);">1</span>
<span class="t" id="t55" style="top:420.34px;font-size:12px;color:#1c1c1c;font-weight:700;left:389.40px;transform:scaleX(0.8997);">April</span>
<span class="t" id="t56" style="top:420.34px;font-size:12px;color:#1c1c1c;font-weight:700;left:441.80px;transform:scaleX(0.9938);">May</span>
<span class="t" id="t57" style="top:420.34px;font-size:12px;color:#1c1c1c;font-weight:700;left:494.00px;transform:scaleX(0.9138);">June</span>
<span class="t" id="t58" style="top:420.34px;font-size:12px;color:#1c1c1c;font-weight:700;left:545.60px;transform:scaleX(0.9119);">July</span>
<span class="t" id="t59" style="top:420.34px;font-size:12px;color:#1c1c1c;font-weight:700;left:599.70px;transform:scaleX(0.9219);">August</span>
<span class="t" id="t60" style="top:420.34px;font-size:12px;color:#1c1c1c;font-weight:700;left:651.70px;transform:scaleX(1.0043);">September</span>
<span class="t" id="t61" style="top:420.34px;font-size:12px;color:#1c1c1c;font-weight:700;left:721.00px;">October</span>
<span class="t" id="t62" style="top:420.34px;font-size:12px;color:#1c1c1c;font-weight:700;left:773.60px;transform:scaleX(1.0121);">November</span>
<span class="t" id="t63" style="top:420.34px;font-size:12px;color:#1c1c1c;font-weight:700;left:839.40px;transform:scaleX(1.0270);">December</span>
<span class="t" id="t64" style="top:420.34px;font-size:12px;color:#1c1c1c;font-weight:700;left:903.00px;transform:scaleX(0.9255);">January</span>
<span class="t" id="t65" style="top:420.34px;font-size:12px;color:#1c1c1c;font-weight:700;letter-spacing:0.3px;left:956.50px;">February</span>
<span class="t" id="t66" style="top:403.34px;font-size:12px;color:#1c1c1c;font-weight:700;left:925.00px;transform:scaleX(1.0710);">2022</span>
<span class="t" id="t67" style="top:453.34px;font-size:12px;color:#1c1c1c;-webkit-text-stroke:0.35px #1c1c1c;left:404.20px;transform:scaleX(1.0779);">56</span>
<span class="t" id="t68" style="top:453.34px;font-size:12px;color:#1c1c1c;-webkit-text-stroke:0.35px #1c1c1c;left:456.60px;transform:scaleX(1.0779);">33</span>
<span class="t" id="t69" style="top:453.34px;font-size:12px;color:#1c1c1c;-webkit-text-stroke:0.35px #1c1c1c;left:509.00px;transform:scaleX(1.0779);">15</span>
<span class="t" id="t70" style="top:453.34px;font-size:12px;color:#1c1c1c;-webkit-text-stroke:0.35px #1c1c1c;left:561.60px;transform:scaleX(1.0779);">13</span>
<span class="t" id="t71" style="top:453.34px;font-size:12px;color:#1c1c1c;-webkit-text-stroke:0.35px #1c1c1c;left:614.40px;transform:scaleX(1.0779);">14</span>
<span class="t" id="t72" style="top:453.34px;font-size:12px;color:#1c1c1c;-webkit-text-stroke:0.35px #1c1c1c;left:683.40px;transform:scaleX(1.0779);">49</span>
<span class="t" id="t73" style="top:453.34px;font-size:12px;color:#1c1c1c;-webkit-text-stroke:0.35px #1c1c1c;left:736.10px;transform:scaleX(1.0779);">30</span>
<span class="t" id="t74" style="top:453.34px;font-size:12px;color:#1c1c1c;-webkit-text-stroke:0.35px #1c1c1c;left:801.80px;transform:scaleX(1.0779);">39</span>
<span class="t" id="t75" style="top:453.34px;font-size:12px;color:#1c1c1c;-webkit-text-stroke:0.35px #1c1c1c;left:866.60px;transform:scaleX(1.0779);">50</span>
<span class="t" id="t76" style="top:453.34px;font-size:12px;color:#1c1c1c;-webkit-text-stroke:0.35px #1c1c1c;left:919.40px;transform:scaleX(1.0779);">48</span>
<span class="t" id="t77" style="top:469.84px;font-size:12px;color:#1c1c1c;-webkit-text-stroke:0.35px #1c1c1c;left:397.00px;transform:scaleX(1.0783);">103</span>
<span class="t" id="t78" style="top:469.84px;font-size:12px;color:#1c1c1c;-webkit-text-stroke:0.35px #1c1c1c;left:456.60px;transform:scaleX(1.0779);">74</span>
<span class="t" id="t79" style="top:469.84px;font-size:12px;color:#1c1c1c;-webkit-text-stroke:0.35px #1c1c1c;left:509.00px;transform:scaleX(1.0779);">39</span>
<span class="t" id="t80" style="top:469.84px;font-size:12px;color:#1c1c1c;-webkit-text-stroke:0.35px #1c1c1c;left:561.60px;transform:scaleX(1.0779);">44</span>
<span class="t" id="t81" style="top:469.84px;font-size:12px;color:#1c1c1c;-webkit-text-stroke:0.35px #1c1c1c;left:614.40px;transform:scaleX(1.0779);">47</span>
<span class="t" id="t82" style="top:469.84px;font-size:12px;color:#1c1c1c;-webkit-text-stroke:0.35px #1c1c1c;left:683.40px;transform:scaleX(1.0779);">65</span>
<span class="t" id="t83" style="top:469.84px;font-size:12px;color:#1c1c1c;-webkit-text-stroke:0.35px #1c1c1c;left:736.10px;transform:scaleX(1.0779);">66</span>
<span class="t" id="t84" style="top:469.84px;font-size:12px;color:#1c1c1c;-webkit-text-stroke:0.35px #1c1c1c;left:801.80px;transform:scaleX(1.0779);">41</span>
<span class="t" id="t85" style="top:469.84px;font-size:12px;color:#1c1c1c;-webkit-text-stroke:0.35px #1c1c1c;left:866.60px;transform:scaleX(1.0779);">84</span>
<span class="t" id="t86" style="top:469.84px;font-size:12px;color:#1c1c1c;-webkit-text-stroke:0.35px #1c1c1c;left:919.40px;transform:scaleX(1.0779);">62</span>
<span class="t" id="t87" style="top:486.34px;font-size:12px;color:#1c1c1c;-webkit-text-stroke:0.35px #1c1c1c;left:397.00px;transform:scaleX(1.0783);">491</span>
<span class="t" id="t88" style="top:486.34px;font-size:12px;color:#1c1c1c;-webkit-text-stroke:0.35px #1c1c1c;left:449.40px;transform:scaleX(1.0783);">221</span>
<span class="t" id="t89" style="top:486.34px;font-size:12px;color:#1c1c1c;-webkit-text-stroke:0.35px #1c1c1c;left:501.80px;transform:scaleX(1.0783);">107</span>
<span class="t" id="t90" style="top:486.34px;font-size:12px;color:#1c1c1c;-webkit-text-stroke:0.35px #1c1c1c;left:561.60px;transform:scaleX(1.0779);">67</span>
<span class="t" id="t91" style="top:486.34px;font-size:12px;color:#1c1c1c;-webkit-text-stroke:0.35px #1c1c1c;left:607.20px;transform:scaleX(1.1285);">116</span>
<span class="t" id="t92" style="top:486.34px;font-size:12px;color:#1c1c1c;-webkit-text-stroke:0.35px #1c1c1c;left:676.20px;transform:scaleX(1.0783);">160</span>
<span class="t" id="t93" style="top:486.34px;font-size:12px;color:#1c1c1c;-webkit-text-stroke:0.35px #1c1c1c;left:728.90px;transform:scaleX(1.0783);">141</span>
<span class="t" id="t94" style="top:486.34px;font-size:12px;color:#1c1c1c;-webkit-text-stroke:0.35px #1c1c1c;left:794.60px;transform:scaleX(1.0783);">109</span>
<span class="t" id="t95" style="top:486.34px;font-size:12px;color:#1c1c1c;-webkit-text-stroke:0.35px #1c1c1c;left:859.40px;transform:scaleX(1.0783);">165</span>
<span class="t" id="t96" style="top:486.34px;font-size:12px;color:#1c1c1c;-webkit-text-stroke:0.35px #1c1c1c;left:912.20px;transform:scaleX(1.0783);">128</span>
<span class="t" id="t97" style="top:502.24px;font-size:12px;color:#1c1c1c;font-weight:700;-webkit-text-stroke:0.2px #1c1c1c;left:397.50px;transform:scaleX(0.6481);">########</span>
<span class="t" id="t98" style="top:502.84px;font-size:12px;color:#1c1c1c;-webkit-text-stroke:0.35px #1c1c1c;left:449.40px;transform:scaleX(1.0783);">337</span>
<span class="t" id="t99" style="top:502.84px;font-size:12px;color:#1c1c1c;-webkit-text-stroke:0.35px #1c1c1c;left:501.80px;transform:scaleX(1.1285);">110</span>
<span class="t" id="t100" style="top:502.84px;font-size:12px;color:#1c1c1c;-webkit-text-stroke:0.35px #1c1c1c;left:561.60px;transform:scaleX(1.0779);">58</span>
<span class="t" id="t101" style="top:502.84px;font-size:12px;color:#1c1c1c;-webkit-text-stroke:0.35px #1c1c1c;left:614.40px;transform:scaleX(1.0779);">79</span>
<span class="t" id="t102" style="top:502.84px;font-size:12px;color:#1c1c1c;-webkit-text-stroke:0.35px #1c1c1c;left:676.20px;transform:scaleX(1.0783);">131</span>
<span class="t" id="t103" style="top:502.84px;font-size:12px;color:#1c1c1c;-webkit-text-stroke:0.35px #1c1c1c;left:736.10px;transform:scaleX(1.0779);">97</span>
<span class="t" id="t104" style="top:502.84px;font-size:12px;color:#1c1c1c;-webkit-text-stroke:0.35px #1c1c1c;left:801.80px;transform:scaleX(1.0779);">85</span>
<span class="t" id="t105" style="top:502.84px;font-size:12px;color:#1c1c1c;-webkit-text-stroke:0.35px #1c1c1c;left:859.40px;transform:scaleX(1.0783);">125</span>
<span class="t" id="t106" style="top:502.84px;font-size:12px;color:#1c1c1c;-webkit-text-stroke:0.35px #1c1c1c;left:919.40px;transform:scaleX(1.0779);">87</span>
<span class="t" id="t107" style="top:518.74px;font-size:12px;color:#1c1c1c;font-weight:700;-webkit-text-stroke:0.2px #1c1c1c;left:449.60px;transform:scaleX(0.6537);">########</span>
<span class="t" id="t108" style="top:519.34px;font-size:12px;color:#1c1c1c;-webkit-text-stroke:0.35px #1c1c1c;left:501.80px;transform:scaleX(1.0783);">158</span>
<span class="t" id="t109" style="top:519.34px;font-size:12px;color:#1c1c1c;-webkit-text-stroke:0.35px #1c1c1c;left:561.60px;transform:scaleX(1.0779);">55</span>
<span class="t" id="t110" style="top:519.34px;font-size:12px;color:#1c1c1c;-webkit-text-stroke:0.35px #1c1c1c;left:614.40px;transform:scaleX(1.0779);">64</span>
<span class="t" id="t111" style="top:519.34px;font-size:12px;color:#1c1c1c;-webkit-text-stroke:0.35px #1c1c1c;left:683.40px;transform:scaleX(1.0779);">96</span>
<span class="t" id="t112" style="top:519.34px;font-size:12px;color:#1c1c1c;-webkit-text-stroke:0.35px #1c1c1c;left:736.10px;transform:scaleX(1.0779);">68</span>
<span class="t" id="t113" style="top:519.34px;font-size:12px;color:#1c1c1c;-webkit-text-stroke:0.35px #1c1c1c;left:801.80px;transform:scaleX(1.0779);">58</span>
<span class="t" id="t114" style="top:519.34px;font-size:12px;color:#1c1c1c;-webkit-text-stroke:0.35px #1c1c1c;left:866.60px;transform:scaleX(1.0779);">93</span>
<span class="t" id="t115" style="top:519.34px;font-size:12px;color:#1c1c1c;-webkit-text-stroke:0.35px #1c1c1c;left:919.40px;transform:scaleX(1.0779);">72</span>
<span class="t" id="t116" style="top:535.24px;font-size:12px;color:#1c1c1c;font-weight:700;-webkit-text-stroke:0.2px #1c1c1c;left:502.00px;transform:scaleX(0.6537);">########</span>
<span class="t" id="t117" style="top:535.84px;font-size:12px;color:#1c1c1c;-webkit-text-stroke:0.35px #1c1c1c;left:561.60px;transform:scaleX(1.0779);">73</span>
<span class="t" id="t118" style="top:535.84px;font-size:12px;color:#1c1c1c;-webkit-text-stroke:0.35px #1c1c1c;left:614.40px;transform:scaleX(1.0779);">61</span>
<span class="t" id="t119" style="top:535.84px;font-size:12px;color:#1c1c1c;-webkit-text-stroke:0.35px #1c1c1c;left:683.40px;transform:scaleX(1.0779);">65</span>
<span class="t" id="t120" style="top:535.84px;font-size:12px;color:#1c1c1c;-webkit-text-stroke:0.35px #1c1c1c;left:736.10px;transform:scaleX(1.0779);">54</span>
<span class="t" id="t121" style="top:535.84px;font-size:12px;color:#1c1c1c;-webkit-text-stroke:0.35px #1c1c1c;left:801.80px;transform:scaleX(1.0779);">34</span>
<span class="t" id="t122" style="top:535.84px;font-size:12px;color:#1c1c1c;-webkit-text-stroke:0.35px #1c1c1c;left:866.60px;transform:scaleX(1.0779);">63</span>
<span class="t" id="t123" style="top:535.84px;font-size:12px;color:#1c1c1c;-webkit-text-stroke:0.35px #1c1c1c;left:919.40px;transform:scaleX(1.0779);">34</span>
<span class="t" id="t124" style="top:551.74px;font-size:12px;color:#1c1c1c;font-weight:700;-webkit-text-stroke:0.2px #1c1c1c;left:554.40px;transform:scaleX(0.6574);">########</span>
<span class="t" id="t125" style="top:552.34px;font-size:12px;color:#1c1c1c;-webkit-text-stroke:0.35px #1c1c1c;left:614.40px;transform:scaleX(1.0779);">93</span>
<span class="t" id="t126" style="top:552.34px;font-size:12px;color:#1c1c1c;-webkit-text-stroke:0.35px #1c1c1c;left:683.40px;transform:scaleX(1.0779);">76</span>
<span class="t" id="t127" style="top:552.34px;font-size:12px;color:#1c1c1c;-webkit-text-stroke:0.35px #1c1c1c;left:736.10px;transform:scaleX(1.0779);">40</span>
<span class="t" id="t128" style="top:552.34px;font-size:12px;color:#1c1c1c;-webkit-text-stroke:0.35px #1c1c1c;left:801.80px;transform:scaleX(1.0779);">26</span>
<span class="t" id="t129" style="top:552.34px;font-size:12px;color:#1c1c1c;-webkit-text-stroke:0.35px #1c1c1c;left:866.60px;transform:scaleX(1.0779);">45</span>
<span class="t" id="t130" style="top:552.34px;font-size:12px;color:#1c1c1c;-webkit-text-stroke:0.35px #1c1c1c;left:919.40px;transform:scaleX(1.0779);">32</span>
<span class="t" id="t131" style="top:568.24px;font-size:12px;color:#1c1c1c;font-weight:700;-webkit-text-stroke:0.2px #1c1c1c;left:607.00px;transform:scaleX(0.6612);">########</span>
<span class="t" id="t132" style="top:568.84px;font-size:12px;color:#1c1c1c;-webkit-text-stroke:0.35px #1c1c1c;left:676.20px;transform:scaleX(1.0783);">184</span>
<span class="t" id="t133" style="top:568.84px;font-size:12px;color:#1c1c1c;-webkit-text-stroke:0.35px #1c1c1c;left:736.10px;transform:scaleX(1.0779);">76</span>
<span class="t" id="t134" style="top:568.84px;font-size:12px;color:#1c1c1c;-webkit-text-stroke:0.35px #1c1c1c;left:801.80px;transform:scaleX(1.0779);">65</span>
<span class="t" id="t135" style="top:568.84px;font-size:12px;color:#1c1c1c;-webkit-text-stroke:0.35px #1c1c1c;left:866.60px;transform:scaleX(1.0779);">81</span>
<span class="t" id="t136" style="top:568.84px;font-size:12px;color:#1c1c1c;-webkit-text-stroke:0.35px #1c1c1c;left:919.40px;transform:scaleX(1.0779);">45</span>
<span class="t" id="t137" style="top:585.34px;font-size:12px;color:#1c1c1c;-webkit-text-stroke:0.35px #1c1c1c;left:665.80px;transform:scaleX(1.0656);">7 832</span>
<span class="t" id="t138" style="top:585.34px;font-size:12px;color:#1c1c1c;-webkit-text-stroke:0.35px #1c1c1c;left:728.90px;transform:scaleX(1.0783);">257</span>
<span class="t" id="t139" style="top:585.34px;font-size:12px;color:#1c1c1c;-webkit-text-stroke:0.35px #1c1c1c;left:794.60px;transform:scaleX(1.1285);">118</span>
<span class="t" id="t140" style="top:585.34px;font-size:12px;color:#1c1c1c;-webkit-text-stroke:0.35px #1c1c1c;left:859.40px;transform:scaleX(1.0783);">163</span>
<span class="t" id="t141" style="top:585.34px;font-size:12px;color:#1c1c1c;-webkit-text-stroke:0.35px #1c1c1c;left:912.20px;transform:scaleX(1.1285);">114</span>
<span class="t" id="t142" style="top:601.24px;font-size:12px;color:#1c1c1c;font-weight:700;-webkit-text-stroke:0.2px #1c1c1c;left:728.80px;transform:scaleX(0.6593);">########</span>
<span class="t" id="t143" style="top:601.84px;font-size:12px;color:#1c1c1c;-webkit-text-stroke:0.35px #1c1c1c;left:794.60px;transform:scaleX(1.0783);">168</span>
<span class="t" id="t144" style="top:601.84px;font-size:12px;color:#1c1c1c;-webkit-text-stroke:0.35px #1c1c1c;left:859.40px;transform:scaleX(1.0783);">205</span>
<span class="t" id="t145" style="top:601.84px;font-size:12px;color:#1c1c1c;-webkit-text-stroke:0.35px #1c1c1c;left:912.20px;transform:scaleX(1.0783);">108</span>
<span class="t" id="t146" style="top:618.34px;font-size:12px;color:#1c1c1c;-webkit-text-stroke:0.35px #1c1c1c;left:784.20px;transform:scaleX(1.0656);">4 927</span>
<span class="t" id="t147" style="top:618.34px;font-size:12px;color:#1c1c1c;-webkit-text-stroke:0.35px #1c1c1c;left:859.40px;transform:scaleX(1.0783);">296</span>
<span class="t" id="t148" style="top:618.34px;font-size:12px;color:#1c1c1c;-webkit-text-stroke:0.35px #1c1c1c;left:912.20px;transform:scaleX(1.0783);">125</span>
<span class="t" id="t149" style="top:634.24px;font-size:12px;color:#1c1c1c;font-weight:700;-webkit-text-stroke:0.2px #1c1c1c;left:847.20px;transform:scaleX(0.6958);">#########</span>
<span class="t" id="t150" style="top:634.84px;font-size:12px;color:#1c1c1c;-webkit-text-stroke:0.35px #1c1c1c;left:912.20px;transform:scaleX(1.0783);">319</span>
<span class="t" id="t151" style="top:667.24px;font-size:12px;color:#1c1c1c;font-weight:700;-webkit-text-stroke:0.2px #1c1c1c;left:912.00px;transform:scaleX(0.6612);">########</span>
<span class="t" id="t152" style="top:453.34px;font-size:12px;color:#1c1c1c;-webkit-text-stroke:0.35px #1c1c1c;left:359.30px;transform:scaleX(1.0766);">3</span>
<span class="t" id="t153" style="top:469.84px;font-size:12px;color:#1c1c1c;-webkit-text-stroke:0.35px #1c1c1c;left:359.30px;transform:scaleX(1.0766);">7</span>
<span class="t" id="t154" style="top:486.34px;font-size:12px;color:#1c1c1c;font-weight:700;left:337.00px;transform:scaleX(0.7157);">#########</span>
<span class="t" id="t155" style="top:420.34px;font-size:12px;color:#1c1c1c;font-weight:700;left:329.40px;transform:scaleX(1.0242);">March</span>
<span class="t" id="t156" style="top:783.34px;font-size:12px;color:#1c1c1c;-webkit-text-stroke:0.3px #1c1c1c;left:72.50px;transform:scaleX(1.0305);">August</span>
<span class="t" id="t157" style="top:799.84px;font-size:12px;color:#1c1c1c;-webkit-text-stroke:0.3px #1c1c1c;left:72.50px;transform:scaleX(0.9914);">September</span>
<span class="t" id="t158" style="top:816.34px;font-size:12px;color:#1c1c1c;-webkit-text-stroke:0.3px #1c1c1c;left:72.50px;transform:scaleX(1.0542);">October</span>
<span class="t" id="t159" style="top:832.84px;font-size:12px;color:#1c1c1c;-webkit-text-stroke:0.3px #1c1c1c;left:72.50px;transform:scaleX(1.0296);">November</span>
<span class="t" id="t160" style="top:849.34px;font-size:12px;color:#1c1c1c;-webkit-text-stroke:0.3px #1c1c1c;left:72.50px;">December</span>
<span class="t" id="t161" style="top:882.34px;font-size:12px;color:#1c1c1c;-webkit-text-stroke:0.3px #1c1c1c;left:72.50px;transform:scaleX(0.9835);">January</span>
<span class="t" id="t162" style="top:866.04px;font-size:12px;color:#1c1c1c;font-weight:700;left:51.70px;transform:scaleX(1.0972);">2023</span>
<span class="t" id="t163" style="top:380.69px;font-size:18.2px;color:#6b6b6b;z-index:10;left:12.50px;transform:scaleX(0.9611);">Область поиска: Указан ID клиента</span>
<span class="t" id="t164" style="top:418.46px;font-size:18px;color:#222;z-index:11;left:63.70px;transform:scaleX(1.0142);">All</span>
<span class="t" id="t165" style="top:445.46px;font-size:18px;color:#222;z-index:11;left:91.50px;">0</span>
<span class="t" id="t166" style="top:472.46px;font-size:18px;color:#222;z-index:11;left:91.50px;">1</span>
<span class="t" id="t167" style="top:681.66px;font-size:18px;color:#6b6b6b;z-index:10;left:49.20px;transform:scaleX(0.9831);">Выделить несколько элементов</span>
<span class="t" id="t168" style="top:738.06px;font-size:17.3px;color:#222;z-index:11;-webkit-text-stroke:0.25px #222;left:160.00px;transform:scaleX(0.8811);">OK</span>
<span class="t" id="t169" style="top:738.06px;font-size:17.3px;color:#222;z-index:11;-webkit-text-stroke:0.25px #222;left:266.40px;transform:scaleX(0.9739);">Отмена</span>
</body></html>
